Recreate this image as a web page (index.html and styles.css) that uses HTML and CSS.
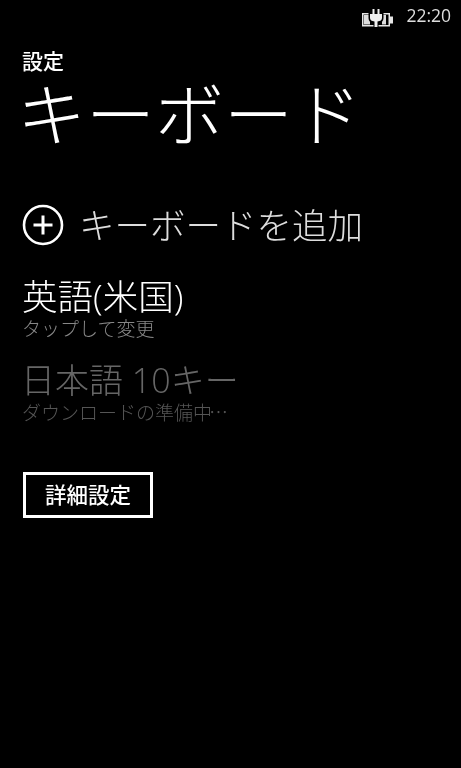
FILE: index.html
```html
<!DOCTYPE html>
<html lang="ja">
<head>
  <meta charset="UTF-8" />
  <meta name="viewport" content="width=device-width, initial-scale=1.0"/>
  <title>キーボード</title>
  <link rel="stylesheet" href="styles.css">
</head>
<body>

  <div class="status-bar">
    <svg class="battery" width="31" height="19" viewBox="0 0 31 19">
      <rect x="0.750" y="5.750" width="26.500" height="12" fill="#000" stroke="#e6e6e6" stroke-width="1.500"/>
      <path d="M2 7H8V16.500H2Z" fill="#ddd"/>
      <path d="M20 7H24V16.500H20Z" fill="#ddd"/>
      <rect x="28" y="8.500" width="3" height="7" fill="#e6e6e6"/>
      <path d="M6.500 4H21.500V10Q21.500 14.500 16.500 15V19H11.500V15Q6.500 14.500 6.500 10Z" fill="#000"/>
      <path d="M8 6H10.500V1H12.500V6H15.500V1H17.500V6H20V10Q20 13 15.500 13.500V19H12.500V13.500Q8 13 8 10Z" fill="#eee"/>
    </svg>
    <span class="clock">22:20</span>
  </div>

  <div class="page">
    <div class="app-name">設定</div>
    <h1 class="title">キーボード</h1>

    <div class="add-row">
      <svg class="add-icon" width="42" height="42" viewBox="0 0 42 42">
        <circle cx="21" cy="21" r="19" fill="none" stroke="#fff" stroke-width="2.600"/>
        <path d="M21 11.500V30.500M11.500 21H30.500" fill="none" stroke="#fff" stroke-width="3"/>
      </svg>
      <span class="add-label">キーボードを追加</span>
    </div>

    <div class="kb-item">
      <div class="kb-name">英語(米国)</div>
      <div class="kb-note">タップして変更</div>
    </div>

    <div class="kb-item disabled">
      <div class="kb-name">日本語 10キー</div>
      <div class="kb-note">ダウンロードの準備<span class="tight">中…</span></div>
    </div>

    <div class="btn">詳細設定</div>
  </div>

</body>
</html>
```

FILE: styles.css
```css
html, body {
  margin: 0;
  height: 100%;
  background-color: #000;
  color: #fff;
  font-family: "Open Sans", "Noto Sans CJK JP", sans-serif;
  overflow: hidden;
}

/* own layers, so the text is drawn in plain grey */
.status-bar, .page {
  will-change: opacity;
}

.status-bar {
  height: 30px;
  display: flex;
  justify-content: flex-end;
  align-items: center;
  gap: 13px;
  padding-right: 10px;
}

.battery {
  margin-top: 5px;
}

.clock {
  font-size: 17.500px;
  color: #ddd;
}

.page {
  padding: 18px 0 0 22px;
}

.app-name {
  font-size: 21px;
  line-height: 26px;
  font-weight: 500;
}

.title {
  margin: 0 0 0 -5px;
  font-size: 69px;
  line-height: 80px;
  font-weight: 300;
  white-space: nowrap;
}

.add-row {
  display: flex;
  align-items: center;
  gap: 15px;
  margin-top: 50px;
}

.add-icon {
  flex: none;
}

.add-label {
  font-size: 35.500px;
  line-height: 42px;
  font-weight: 300;
  color: #ddd;
}

.kb-item {
  margin-top: 29px;
}

.kb-name {
  font-size: 35.500px;
  line-height: 42px;
  font-weight: 300;
  white-space: nowrap;
}

.kb-note {
  font-family: "Noto Sans CJK JP", sans-serif;
  font-size: 19px;
  line-height: 22px;
  font-weight: 300;
  color: #888;
}

.tight {
  letter-spacing: -3px;
}

.disabled {
  margin-top: 20px;
}

.disabled .kb-name {
  font-size: 34px;
  margin-left: -1px;
  color: #666;
}

.disabled .kb-note {
  color: #555;
}

.btn {
  margin: 49px 0 0 1px;
  width: 124px;
  height: 37px;
  padding-bottom: 3px;
  border: 3px solid #fff;
  display: flex;
  justify-content: center;
  align-items: center;
  font-size: 21.500px;
  font-weight: 500;
}
```
